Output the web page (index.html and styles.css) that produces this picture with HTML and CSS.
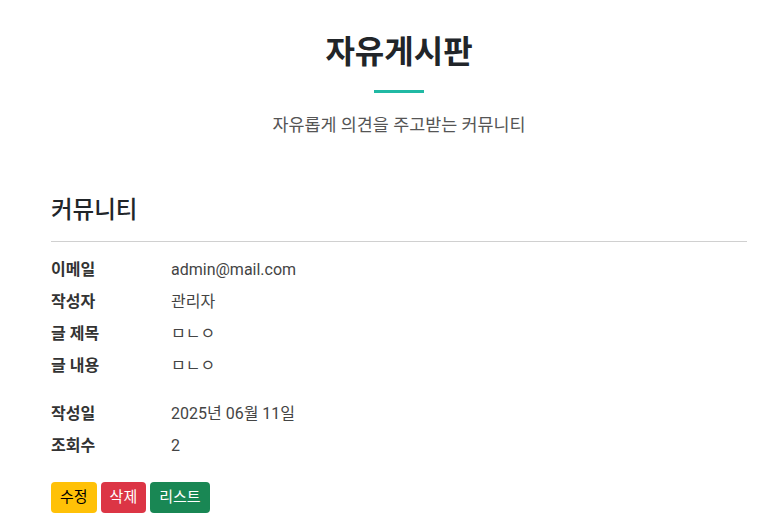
FILE: index.html
```html
<!DOCTYPE html>
<html lang="ko">
<head>
<meta charset="utf-8">
<link rel="stylesheet" href="styles.css">
</head>
<body>
<div class="page">
  <header class="hero">
    <h1 class="hero-title">자유게시판</h1>
    <div class="hero-bar"></div>
    <p class="hero-sub">자유롭게 의견을 주고받는 커뮤니티</p>
  </header>
  <section class="board">
    <h2 class="board-title">커뮤니티</h2>
    <hr class="board-rule">
    <dl class="info">
      <dt>이메일</dt><dd>admin@mail.com</dd>
      <dt>작성자</dt><dd>관리자</dd>
      <dt>글 제목</dt><dd>ㅁㄴㅇ</dd>
      <dt>글 내용</dt><dd>ㅁㄴㅇ</dd>
    </dl>
    <dl class="info info-meta">
      <dt>작성일</dt><dd>2025년 06월 11일</dd>
      <dt>조회수</dt><dd>2</dd>
    </dl>
    <div class="actions">
      <button class="btn btn-edit">수정</button>
      <button class="btn btn-delete">삭제</button>
      <button class="btn btn-list">리스트</button>
    </div>
  </section>
</div>
</body>
</html>
```
FILE: styles.css
```css
* { box-sizing: border-box; }
html, body { margin: 0; padding: 0; background: #fff; }
body {
  font-family: Roboto, "Noto Sans CJK KR", sans-serif;
  color: #212529;
  font-size: 16px;
  line-height: 1.5;
}
.page {
  width: 720px;
  margin-left: 39px;
  padding: 0 12px;
}
.hero {
  display: flex;
  flex-direction: column;
  align-items: center;
  padding-top: 28px;
}
.hero-title {
  margin: 0;
  font-size: 32px;
  font-weight: 700;
  line-height: 48px;
  color: #212529;
}
.hero-bar {
  width: 50px;
  height: 3px;
  background: #20b9a4;
  margin-top: 14px;
}
.hero-sub {
  margin: 19px 0 0;
  font-size: 17.4px;
  color: #555;
  line-height: 26px;
}
.board { padding-top: 54px; }
.board-title {
  margin: 0;
  font-size: 23.5px;
  font-weight: 500;
  line-height: 36px;
  color: #212529;
}
.board-rule {
  margin: 13px 0 12px;
  border: 0;
  border-top: 1px solid #d0d0d0;
}
.info {
  display: grid;
  grid-template-columns: 120px 1fr;
  grid-auto-rows: 32px;
  margin: 0;
  align-items: center;
}
.info dt {
  font-weight: 700;
  color: #333;
}
.info dd {
  margin: 0;
  color: #444;
}
.info-meta { margin-top: 16px; }
.actions {
  display: flex;
  gap: 4px;
  margin-top: 20px;
}
.btn {
  font-family: inherit;
  font-size: 15px;
  line-height: 21px;
  padding: 5px 9px;
  border: 0;
  border-radius: 4px;
}
.btn-edit { background: #ffc107; color: #000; }
.btn-delete { background: #dc3545; color: #fff; }
.btn-list { background: #198754; color: #fff; }
```
